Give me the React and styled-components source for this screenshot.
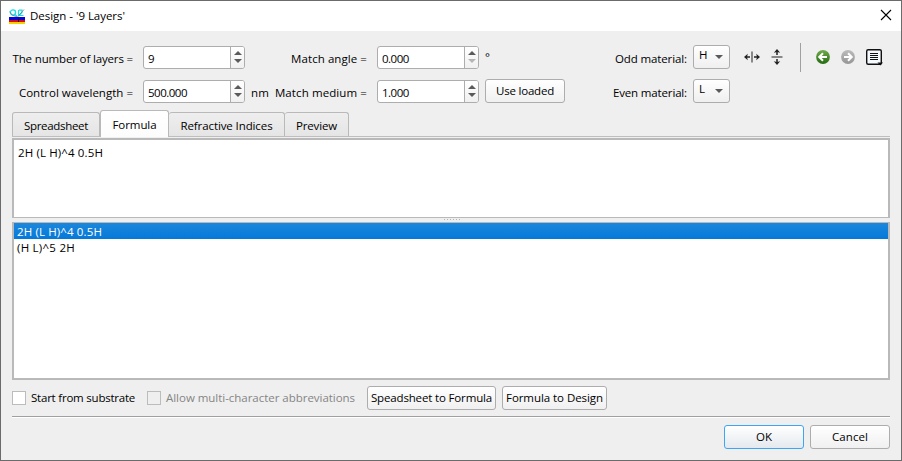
import React from "react";
import styled, { createGlobalStyle, css } from "styled-components";

const Global = createGlobalStyle`
  * { box-sizing: border-box; }
  html, body { margin: 0; padding: 0; overflow: hidden; }
  body { font-family: "Open Sans", "Noto Sans", sans-serif; font-size: 11.5px; line-height: 16px; color: #000; }
`;

const Window = styled.div`
  width: 902px;
  height: 461px;
  border: 1px solid #6b6b6b;
  background: #efefef;
  display: flex;
  flex-direction: column;
`;
const TitleBar = styled.header`
  height: 30px;
  flex: none;
  background: #fff;
  display: flex;
  align-items: center;
  padding: 0 9px 0 8px;
`;
const Title = styled.div`
  flex: 1;
  margin-left: 5px;
  letter-spacing: ${(p) => p.$ls}px;
`;
const CloseIcon = styled.svg`
  width: 12px;
  height: 12px;
  margin-top: -2px;
`;
const Body = styled.main`
  flex: 1;
  min-height: 0;
  padding: 0 11px;
  display: flex;
  flex-direction: column;
`;
const Text = styled.span`
  white-space: nowrap;
  letter-spacing: ${(p) => p.$ls || 0}px;
`;

const Controls = styled.section`
  height: 79px;
  flex: none;
  display: flex;
`;
const Fields = styled.div`
  display: grid;
  grid-template-columns: 121px 102px 34px 98px 102px 80px;
  grid-template-rows: 24px 24px;
  row-gap: 10px;
  padding-top: 14px;
  align-items: center;
`;
const FieldLabel = styled(Text)`
  justify-self: end;
  padding-top: 3px;
`;
const DegreeMark = styled(Text)`
  padding-left: 16px;
`;
const Unit = styled(Text)`
  justify-self: end;
  padding-top: 3px;
`;
const SpinBox = styled.div`
  width: 102px;
  height: 23px;
  margin-left: 10px;
  align-self: end;
  display: flex;
  border: 1px solid #adadad;
  border-radius: 3px;
  background: #fff;
  overflow: hidden;
`;
const SpinValue = styled.div`
  flex: 1;
  padding: 3px 0 0 4px;
  line-height: 17px;
  letter-spacing: -0.49px;
`;
const SpinButtons = styled.div`
  width: 14px;
  border-left: 1px solid #adadad;
  background: linear-gradient(#fff, #f0f0f0);
  display: flex;
  flex-direction: column;
  align-items: center;
  justify-content: center;
  gap: 4px;
  padding-bottom: 1px;
`;
const Arrow = styled.i`
  width: 0;
  height: 0;
  border: 4px solid transparent;
  ${(p) =>
    p.$up
      ? css`border-top: 0; border-bottom-color: #5a5a5a;`
      : css`border-bottom: 0; border-top-color: ${p.$dim ? "#b5b5b5" : "#5a5a5a"};`}
`;
const Button = styled.button`
  width: ${(p) => p.$w}px;
  height: 24px;
  flex: none;
  padding: 0;
  font: inherit;
  color: #000;
  white-space: nowrap;
  letter-spacing: ${(p) => p.$ls || 0}px;
  border: 1px solid ${(p) => (p.$primary ? "#3ea5f5" : "#adadad")};
  border-radius: 3px;
  background: ${(p) => (p.$primary ? "linear-gradient(#fff, #e4e9ee)" : "linear-gradient(#fff, #f0f0f0)")};
`;
const LoadedButton = styled(Button)`
  margin-left: 16px;
`;
const Materials = styled.div`
  display: grid;
  grid-template-columns: 75px 37px;
  grid-template-rows: 24px 24px;
  row-gap: 10px;
  column-gap: 6px;
  padding-top: 14px;
  margin-left: 63px;
  align-items: center;
`;
const Select = styled.div`
  height: 24px;
  border: 1px solid #adadad;
  border-radius: 3px;
  background: linear-gradient(#fff, #efefef);
  display: flex;
  align-items: center;
  justify-content: space-between;
  padding: 0 6px 4px 5px;
`;
const SelectArrow = styled(Arrow)`
  margin-top: 4px;
`;
const Tools = styled.div`
  display: flex;
  height: 52px;
  align-items: center;
  margin-left: 13px;
`;
const ToolIcon = styled.svg`
  width: 18px;
  height: 18px;
  flex: none;
  display: block;
  margin-left: ${(p) => p.$gap || 0}px;
`;
const ToolDivider = styled.div`
  width: 1px;
  height: 29px;
  background: #a0a0a0;
  margin: 1px 13px 0 14px;
`;

const Tabs = styled.nav`
  display: flex;
  align-items: flex-end;
  height: 27px;
  flex: none;
  border-bottom: 1px solid #bebebe;
`;
const Tab = styled.div`
  height: ${(p) => (p.$active ? 27 : 24)}px;
  width: ${(p) => p.$w}px;
  border: 1px solid #b9b9b9;
  border-bottom: 0;
  border-left-width: ${(p) => (p.$joined ? 0 : 1)}px;
  border-radius: 3px 3px 0 0;
  background: ${(p) => (p.$active ? "linear-gradient(#fff, #fcfcfc)" : "linear-gradient(#eee, #e5e5e5)")};
  margin-bottom: ${(p) => (p.$active ? -1 : 0)}px;
  text-align: center;
  padding-top: ${(p) => (p.$active ? 6 : 5)}px;
  letter-spacing: ${(p) => p.$ls}px;
`;
const Editor = styled.div`
  height: 80px;
  flex: none;
  margin-top: 1px;
  border: 2px solid #b9b9b9;
  border-bottom-width: 1px;
  background: #fff;
  padding: 5px 4px;
  letter-spacing: 0.13px;
`;
const Splitter = styled.div`
  height: 4px;
  flex: none;
  display: flex;
  justify-content: center;
  align-items: flex-start;
  padding: 1px 0 0 2px;
  gap: 2px;
`;
const Dot = styled.i`
  width: 1px;
  height: 1px;
  background: #b4b4b4;
`;
const List = styled.div`
  height: 158px;
  flex: none;
  border: 2px solid #b9b9b9;
  border-top-width: 1px;
  background: #fff;
`;
const Item = styled.div`
  height: 16px;
  padding-left: 3px;
  line-height: 17px;
  letter-spacing: ${(p) => p.$ls}px;
  color: ${(p) => (p.$selected ? "#fff" : "#000")};
  background: ${(p) => (p.$selected ? "linear-gradient(#1b87dc, #0579d9)" : "transparent")};
`;

const Options = styled.div`
  height: 37px;
  flex: none;
  display: flex;
  align-items: center;
  border-bottom: 1px solid #a0a0a0;
`;
const Check = styled.label`
  display: flex;
  align-items: center;
  gap: 5px;
  width: ${(p) => p.$w}px;
  color: ${(p) => (p.$disabled ? "#858585" : "#000")};
`;
const Box = styled.span`
  width: 14px;
  height: 14px;
  border: 1px solid #bcbcbc;
  background: ${(p) => (p.$disabled ? "#efefef" : "#fff")};
`;
const Actions = styled.footer`
  flex: 1;
  border-top: 1px solid #fff;
  display: flex;
  justify-content: flex-end;
  gap: 6px;
  padding-top: 7px;
`;
const Pair = styled.div`
  display: flex;
  gap: 6px;
`;

function Spin({ value, dim }) {
  return (
    <SpinBox>
      <SpinValue>{value}</SpinValue>
      <SpinButtons>
        <Arrow $up />
        <Arrow $dim={dim} />
      </SpinButtons>
    </SpinBox>
  );
}

function AppLogo() {
  return (
    <svg width="16" height="15" viewBox="0 0 16 15" shapeRendering="crispEdges">
      <g shapeRendering="auto" fill="none">
        <ellipse cx="4" cy="3.5" rx="2.6" ry="2.6" stroke="#19dfe3" strokeWidth="1.3" />
        <path d="M5 5L8 7M10 1.2H13V3.5L10 6.5H14.5M9.5 1V6" stroke="#19dfe3" strokeWidth="1.2" />
        <path d="M0.5 2.5L3 6L8.5 8L15 0.5" stroke="#5b8790" strokeWidth="0.8" />
      </g>
      <rect y="8" width="16" height="4" fill="#0404dc" />
      <rect y="11" width="16" height="2" fill="#d40c0c" />
      <rect y="13" width="16" height="2" fill="#f5d300" />
      <rect x="9" y="8" width="1" height="5" fill="#15153c" />
    </svg>
  );
}

function SwapIcon({ vertical, gap }) {
  return (
    <ToolIcon $gap={gap} viewBox="0 0 18 18" fill="none" stroke="#222" strokeWidth="1.5">
      <g transform={vertical ? "rotate(90 9 9)" : undefined}>
        <path d="M9 3.5V14.5" stroke="#666" />
        <path d="M7 9H3M11 9H15" />
        <path d="M1 9L4.8 5.8L4 9L4.8 12.2ZM17 9L13.2 5.8L14 9L13.2 12.2Z" fill="#222" stroke="none" />
      </g>
    </ToolIcon>
  );
}

function RoundArrow({ green, gap }) {
  const id = green ? "back" : "forward";
  return (
    <ToolIcon $gap={gap} viewBox="0 0 18 18">
      <defs>
        <linearGradient id={id} x2="0" y2="1">
          <stop stopColor={green ? "#71ab4b" : "#bcbcbc"} />
          <stop offset="1" stopColor={green ? "#246b10" : "#969696"} />
        </linearGradient>
      </defs>
      <circle cx="9" cy="9" r="6.9" fill={`url(#${id})`} />
      <path
        transform={green ? undefined : "rotate(180 9 9)"}
        d="M13 9H5.8M9 5.2L5.2 9L9 12.8"
        fill="none"
        stroke="#fff"
        strokeWidth="2"
      />
    </ToolIcon>
  );
}

export default function App() {
  return (
    <>
      <Global />
      <Window>
        <TitleBar>
          <AppLogo />
          <Title $ls={-0.03}>Design - '9 Layers'</Title>
          <CloseIcon viewBox="0 0 12 12" stroke="#000" strokeWidth="1.1">
            <path d="M1 1L11 11M11 1L1 11" />
          </CloseIcon>
        </TitleBar>
        <Body>
          <Controls>
            <Fields>
              <FieldLabel $ls={-0.15}>The number of layers =</FieldLabel>
              <Spin value="9" />
              <span />
              <FieldLabel $ls={0.07}>Match angle =</FieldLabel>
              <Spin value="0.000" dim />
              <DegreeMark>°</DegreeMark>
              <FieldLabel $ls={0.02}>Control wavelength =</FieldLabel>
              <Spin value="500.000" />
              <Unit $ls={0.1}>nm</Unit>
              <FieldLabel $ls={0.1}>Match medium =</FieldLabel>
              <Spin value="1.000" />
              <LoadedButton $w={80} $ls={-0.21}>Use loaded</LoadedButton>
            </Fields>
            <Materials>
              <FieldLabel $ls={-0.11}>Odd material:</FieldLabel>
              <Select>H<SelectArrow /></Select>
              <FieldLabel $ls={-0.15}>Even material:</FieldLabel>
              <Select>L<SelectArrow /></Select>
            </Materials>
            <Tools>
              <SwapIcon />
              <SwapIcon vertical gap={7} />
              <ToolDivider />
              <RoundArrow green />
              <RoundArrow gap={7} />
              <ToolIcon $gap={8} viewBox="0 0 18 18">
                <rect x="1.7" y="1.7" width="14.6" height="14.6" rx="1.5" fill="#f5faff" stroke="#111" strokeWidth="1.4" />
                <path d="M5 5.5H13M5 7.5H13M5 9.5H13M5 11.5H13" stroke="#111" strokeWidth="1" />
                <path d="M12.5 14.5H18L15.3 17.5Z" fill="#111" />
              </ToolIcon>
            </Tools>
          </Controls>
          <Tabs>
            <Tab $w={88} $ls={-0.31}>Spreadsheet</Tab>
            <Tab $active $w={69} $ls={-0.08}>Formula</Tab>
            <Tab $joined $w={116} $ls={-0.1}>Refractive Indices</Tab>
            <Tab $joined $w={64} $ls={-0.15}>Preview</Tab>
          </Tabs>
          <Editor>2H (L H)^4 0.5H</Editor>
          <Splitter>{[0, 1, 2, 3, 4, 5].map((i) => <Dot key={i} />)}</Splitter>
          <List>
            <Item $selected $ls={0.13}>2H (L H)^4 0.5H</Item>
            <Item $ls={0.25}>(H L)^5 2H</Item>
          </List>
          <Options>
            <Check $w={135}><Box /><Text $ls={-0.22}>Start from substrate</Text></Check>
            <Check $w={220} $disabled><Box $disabled /><Text $ls={-0.03}>Allow multi-character abbreviations</Text></Check>
            <Pair>
              <Button $w={129} $ls={-0.15}>Speadsheet to Formula</Button>
              <Button $w={105} $ls={-0.06}>Formula to Design</Button>
            </Pair>
          </Options>
          <Actions>
            <Button $primary $w={80}>OK</Button>
            <Button $w={80} $ls={0.07}>Cancel</Button>
          </Actions>
        </Body>
      </Window>
    </>
  );
}
